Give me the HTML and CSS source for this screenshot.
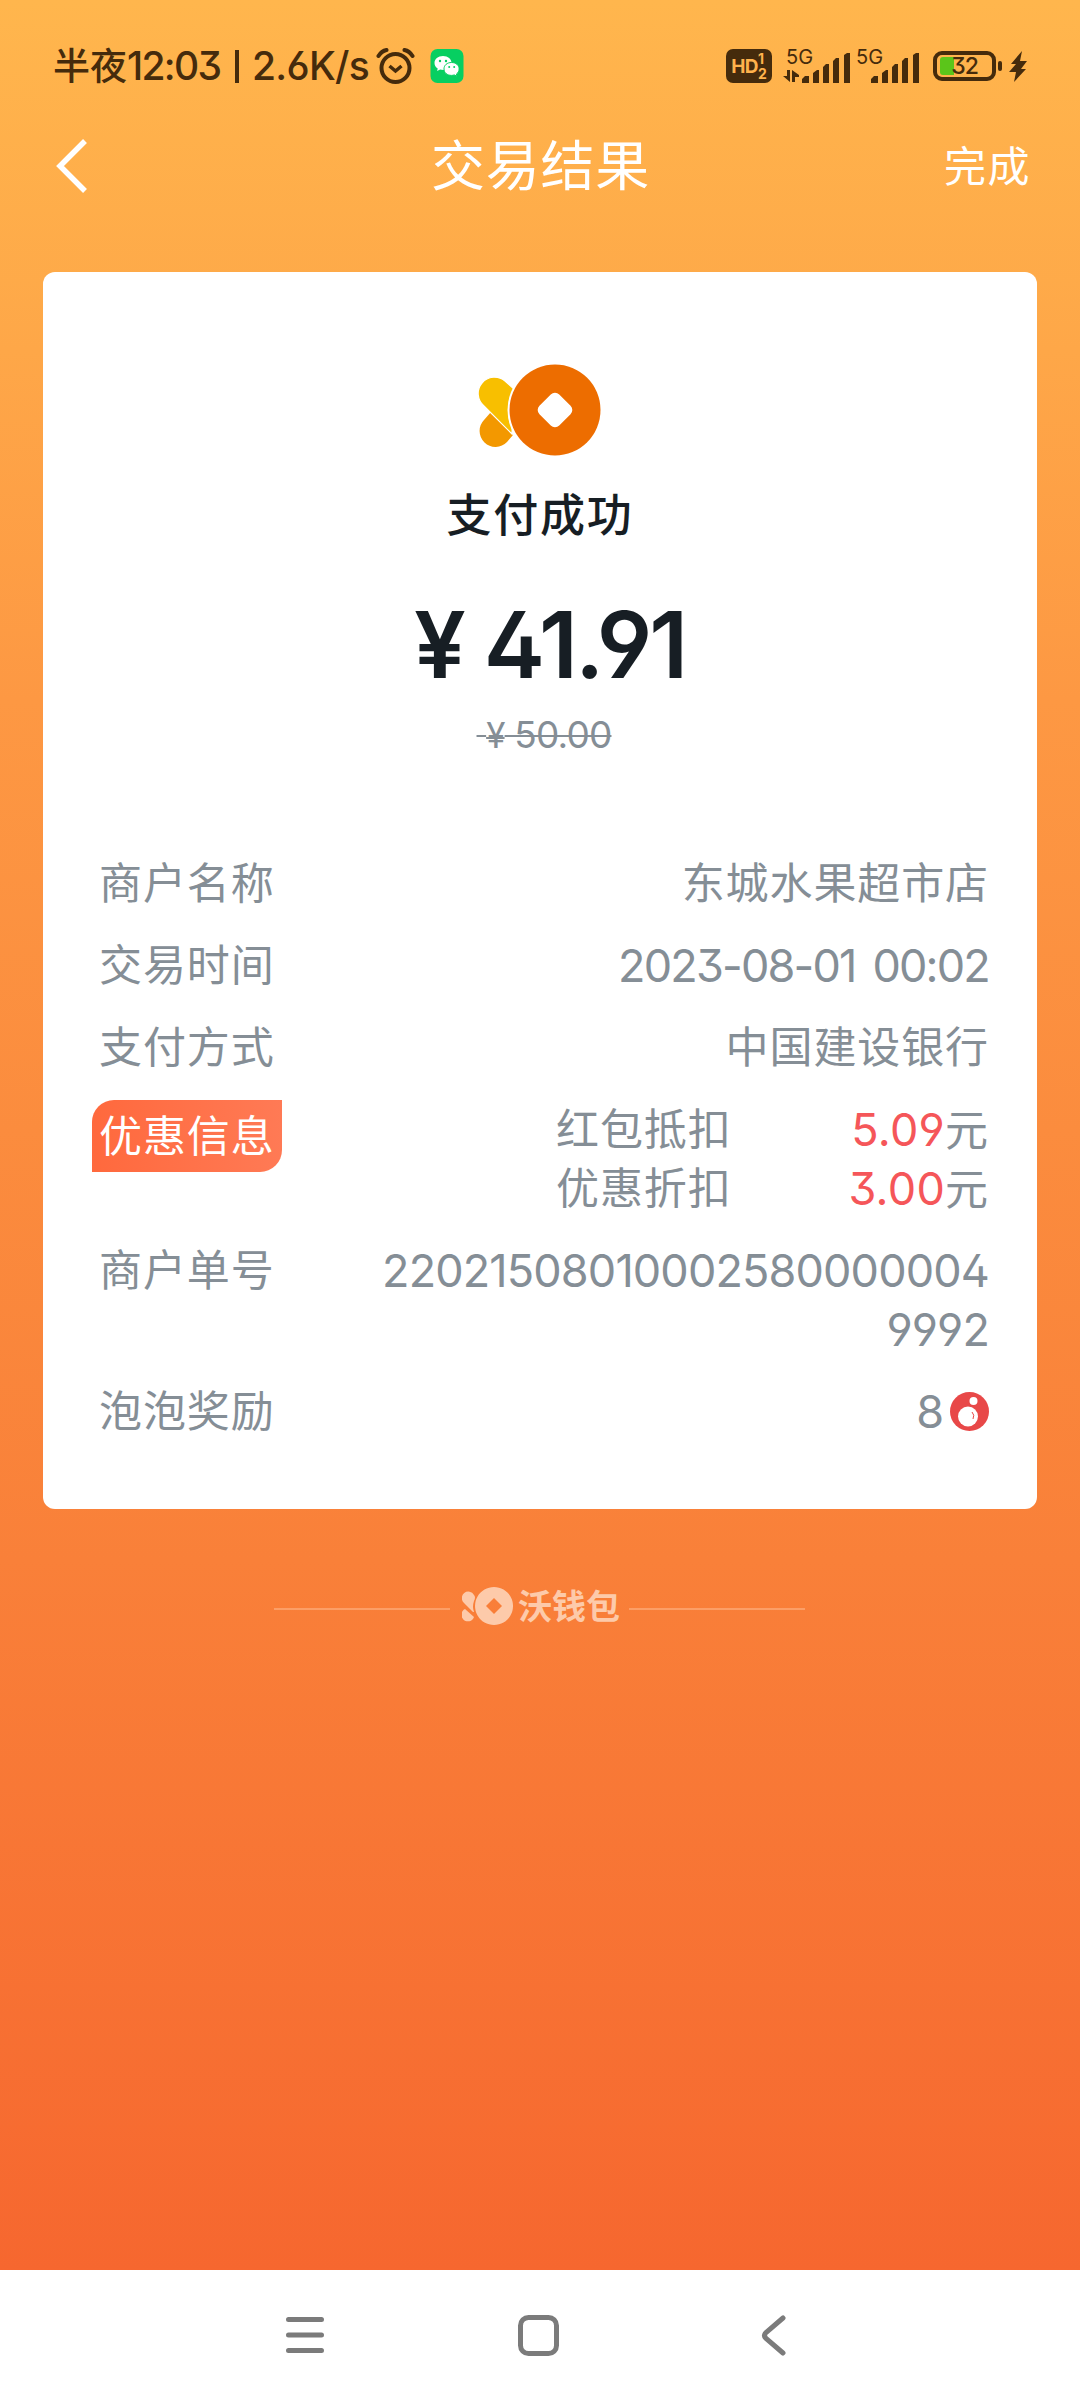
FILE: index.html
```html
<!DOCTYPE html>
<html lang="zh-CN">
<head>
<meta charset="utf-8">
<title>交易结果</title>
<link rel="stylesheet" href="styles.css">
</head>
<body>
<svg class="defs" width="0" height="0" aria-hidden="true">
  <symbol id="bars" viewBox="0 0 48 30">
    <path d="M0 30v-4l3-3h4v7zM11 30V20l4-3h2v13zM21 30V14l3-3h3v19zM31 30V8l3-3h3v25zM42 30V2l3-2h3v30z"/>
  </symbol>
</svg>
<div class="screen">
  <header class="status">
    <span class="clock">半夜<b class="num">12:03</b></span>
    <span class="bar"></span>
    <span class="clock speed">2.6K/s</span>
    <svg class="alarm" width="39" height="36" viewBox="0 0 38 36" fill="none" stroke="#452b0c" stroke-width="4">
      <circle cx="19" cy="20" r="14"/><path d="M2 8Q5 3 10 2M28 2Q33 3 36 8" stroke-linecap="round"/><path d="M13 18l6 5 6-5" stroke-width="3.5"/>
    </svg>
    <svg class="wechat" width="34" height="34" viewBox="0 0 33 34">
      <rect width="33" height="34" rx="7" fill="#07cf61"/>
      <path fill="#fff" d="M12.500 7C7.500 7 4 10 4 14c0 2.300 1.300 4.300 3.200 5.600L6.600 22l3-1.500c1 .3 2 .4 3.400.4C17 21 21 18 21 14S17.500 7 12.500 7z"/>
      <path fill="#fff" stroke="#07cf61" stroke-width="1" d="M21 13.500c-4.400 0-7.500 2.700-7.500 6.400s3.100 6.500 7.500 6.500c1 0 2-.2 2.800-.5l2.700 1.500-.6-2.300c1.700-1.200 2.700-3 2.700-5.200 0-3.700-3.200-6.400-7.600-6.400z"/>
      <g fill="#07cf61"><circle cx="9.500" cy="12" r="1.200"/><circle cx="15.500" cy="12" r="1.200"/><circle cx="18.700" cy="18" r="1"/><circle cx="23.700" cy="18" r="1"/></g>
    </svg>
    <span class="hd"><b>HD</b><span class="hd-sims"><i>1</i><i>2</i></span></span>
    <span class="signal first"><small>5G</small>
      <svg class="arrows" width="16" height="12" viewBox="0 0 16 12" fill="#452b0c"><path d="M4 0h3v12L0 6h4zM9 0l7 5v2h-4v5H9z"/></svg>
      <svg class="bars" width="48" height="30"><use href="#bars"/></svg></span>
    <span class="signal"><small>5G</small><svg class="bars" width="48" height="30"><use href="#bars"/></svg></span>
    <span class="battery"><span class="level"></span><span class="pct">32</span></span>
    <span class="battery-tip"></span>
    <svg class="bolt" width="18" height="31" viewBox="0 0 18 31" fill="#452b0c"><path d="M13 0L2 13h5L0 21h7L5 31 17 18h-5l6-8h-7z"/></svg>
  </header>

  <nav class="titlebar">
    <svg width="32" height="56" viewBox="0 0 32 56" fill="none" stroke="#fff" stroke-width="5.500"><path d="M29 3L4 28l25 25"/></svg>
    <h1>交易结果</h1>
    <span class="done">完成</span>
  </nav>

  <main class="card">
    <section class="summary">
      <svg class="logo" width="124" height="94" viewBox="0 0 124 94">
        <path fill="#f39800" d="M13 49L6 57a15.500 15.500 0 0 0 23 22l6-7z"/>
        <path fill="#f8bf00" stroke="#fff" stroke-width="1.200" d="M34 71L6 43A16 16 0 0 1 27 18l9 8z"/>
        <circle cx="77" cy="47" r="47.500" fill="#fff"/>
        <circle cx="77" cy="47" r="45.500" fill="#ed6d00"/>
        <rect x="63" y="33" width="28" height="28" rx="6" fill="#fff" transform="rotate(45 77 47)"/>
      </svg>
      <h2>支付成功</h2>
      <p class="amount"><span class="yen">¥</span><span>41.91</span></p>
      <p class="original">&nbsp;<span class="yen">¥</span>&nbsp;50.00</p>
    </section>
    <dl class="details">
      <div class="row"><dt>商户名称</dt><dd>东城水果超市店</dd></div>
      <div class="row"><dt>交易时间</dt><dd class="num date">2023-08-01 00:02</dd></div>
      <div class="row"><dt>支付方式</dt><dd>中国建设银行</dd></div>
      <div class="row"><dt class="badge">优惠信息</dt>
        <dd class="discounts">
          <div class="discount"><span>红包抵扣</span><span><em>5.09</em>元</span></div>
          <div class="discount"><span>优惠折扣</span><span><em>3.00</em>元</span></div>
        </dd></div>
      <div class="row"><dt>商户单号</dt><dd class="num order">220215080100025800000049992</dd></div>
      <div class="row"><dt>泡泡奖励</dt><dd class="num reward">8<svg width="39" height="39" viewBox="0 0 39 39"><circle cx="19.500" cy="19.500" r="19.500" fill="#e84848"/><circle cx="18" cy="24.500" r="10" fill="#fff"/><circle cx="23.500" cy="9" r="4" fill="#fff"/><path d="M22 20q3 3 1 7" fill="none" stroke="#e84848"/></svg></dd></div>
    </dl>
  </main>

  <footer class="brand">
    <span class="rule"></span>
    <svg width="51" height="38" viewBox="0 0 51 38" fill="#fdcaaa">
      <path d="M11 25L2 16A6.500 6.500 0 1 1 12 8q2 2 0 6-2 6 0 11zM3 22l9 8A6.500 6.500 0 1 1 3 22z"/>
      <path fill-rule="evenodd" d="M32 0a19 19 0 1 0 .01 0zM32 11l8 8-8 8-8-8z"/>
    </svg>
    <span class="name">沃钱包</span>
    <span class="rule"></span>
  </footer>

  <nav class="keys">
    <svg width="38" height="38" viewBox="0 0 38 38" stroke="#7b7b7b" stroke-width="5" stroke-linecap="round"><path d="M2.500 3.500h33M2.500 19h33M2.500 34.500h33"/></svg>
    <svg width="41" height="41" viewBox="0 0 41 41" fill="none" stroke="#7b7b7b" stroke-width="5"><rect x="2.500" y="2.500" width="36" height="36" rx="8"/></svg>
    <svg width="25" height="41" viewBox="0 0 25 41" fill="none" stroke="#7b7b7b" stroke-width="5" stroke-linecap="round"><path d="M22 3L5 17.500q-3 3 0 6L22 38"/></svg>
  </nav>
</div>
</body>
</html>
```
FILE: styles.css
```css
* { box-sizing: border-box; margin: 0; padding: 0; }
body {
  width: 1080px;
  height: 2400px;
  font-family: Inter, "Noto Sans CJK SC", sans-serif;
  font-feature-settings: "ss01" 1, "cv04" 1, "cv03" 1;
  color: #858e96;
}
.defs { position: absolute; }
svg { display: block; flex: none; }
.screen {
  display: flex;
  flex-direction: column;
  height: 2400px;
  background: linear-gradient(#ffb64d, #fd9843 700px, #f98039 1560px, #f6672f 2270px);
}

/* Status bar */
.status { display: flex; align-items: center; height: 132px; padding-left: 53px; color: #452b0c; }
.clock { font-size: 37px; font-weight: 500; line-height: 44px; white-space: nowrap; width: 168px; }
.clock .num { font-size: 39px; font-weight: 500; letter-spacing: -1.700px; }
.bar { width: 4px; height: 33px; margin: 0 13px 0 14px; background: #452b0c; }
.speed { width: 124px; font-size: 39px; letter-spacing: -0.700px; }
.wechat { margin-left: 15px; }
.hd { display: flex; align-items: center; justify-content: center; width: 46px; height: 34px; margin-left: 262px; border-radius: 7px; background: #452b0c; color: #ffb24c; }
.hd b { font-size: 19px; letter-spacing: -0.5px; }
.hd-sims { display: flex; flex-direction: column; font-size: 14px; font-weight: 700; line-height: 15px; }
.hd-sims i { font-style: normal; }
.signal { position: relative; display: flex; align-items: flex-end; justify-content: flex-end; width: 63px; height: 34px; margin-left: 6px; }
.signal.first { width: 72px; }
.signal small { position: absolute; left: 0; top: -3px; font-size: 20px; line-height: 22px; }
.signal.first small { left: 8px; }
.arrows { margin: 0 auto 1px 5px; }
.bars { fill: #452b0c; }
.battery { position: relative; display: flex; align-items: center; justify-content: center; width: 63px; height: 30px; margin-left: 14px; border: 4px solid #452b0c; border-radius: 9px; }
.level { position: absolute; left: 3px; top: 2px; width: 14px; height: 18px; border-radius: 3px 0 0 3px; background: #5bc51a; }
.pct { position: relative; font-size: 23px; font-weight: 500; line-height: 24px; letter-spacing: -1px; }
.battery-tip { width: 4px; height: 10px; margin-left: 2px; border-radius: 2px; background: #452b0c; }
.bolt { margin-left: 7px; }

/* Title bar */
.titlebar { display: grid; grid-template-columns: 150px 1fr 150px; align-items: center; height: 68px; padding: 0 49px 0 56px; color: #fff; }
.titlebar h1 { margin: 2px 6px 0 0; font-size: 54px; font-weight: 400; line-height: 66px; letter-spacing: 0.800px; text-align: center; }
.done { padding-top: 2px; font-size: 42px; line-height: 60px; letter-spacing: 1.500px; text-align: right; }

/* Receipt */
.card { width: 994px; height: 1237px; margin: 72px 43px 0; padding: 91px 48px 0 56px; border-radius: 12px; background: #fff; }
.summary { display: flex; flex-direction: column; align-items: center; height: 491px; color: #171e24; }
.logo { margin-right: 9px; }
.summary h2 { margin: 29px 8px 0 0; font-size: 45px; font-weight: 500; line-height: 60px; letter-spacing: 1.700px; }
.amount { display: flex; gap: 21px; height: 112px; margin: 43px 0 0 11px; font-size: 92px; font-weight: 600; line-height: 112px; letter-spacing: -3px; }
.original { height: 44px; margin-top: 12px; font-size: 37px; line-height: 44px; letter-spacing: -0.800px; color: #858e96; text-decoration: line-through; text-decoration-thickness: 2px; }
.original .yen { font-size: 35px; }
.details { display: flex; flex-direction: column; gap: 23px; }
.row { display: flex; justify-content: space-between; font-size: 43px; line-height: 59px; }
dt, dd { letter-spacing: 0.900px; }
dt { white-space: nowrap; }
dd { text-align: right; }
.num { font-size: 45px; }
.date { letter-spacing: -1.800px; word-spacing: 6px; }
.badge { width: 190px; height: 72px; margin: 0 0 -13px -7px; padding-left: 7px; line-height: 72px; color: #fff; background: linear-gradient(90deg, #ff693d, #ff7a55); border-radius: 22px 0; }
.discounts { display: flex; flex-direction: column; width: 433px; }
.discount { display: flex; justify-content: space-between; height: 59px; }
.discount em { font-size: 45px; font-style: normal; letter-spacing: 0.300px; color: #f55659; }
.order { width: 609px; letter-spacing: -0.850px; overflow-wrap: anywhere; }
.reward { display: flex; align-items: center; gap: 5px; }

/* Brand */
.brand { display: flex; align-items: center; height: 38px; margin-top: 78px; padding-left: 274px; color: #fdcaaa; }
.rule { width: 176px; height: 2px; margin-top: 5px; background: #fc9e66; }
.brand svg { margin-left: 12px; }
.name { width: 102px; margin: 2px 9px 0 5px; font-size: 34px; font-weight: 700; line-height: 38px; white-space: nowrap; }

/* System keys */
.keys { display: flex; align-items: center; height: 130px; margin-top: auto; padding-left: 286px; background: #fff; }
.keys svg + svg { margin-left: 194px; }
.keys svg:last-child { margin-left: 202px; }
```
